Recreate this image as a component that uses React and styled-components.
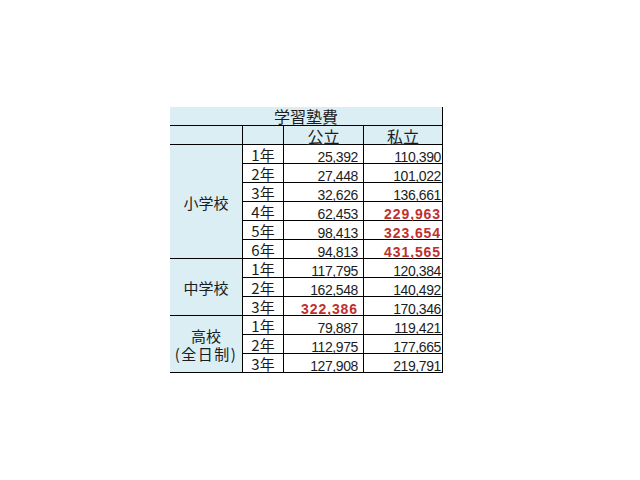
import React from "react";
import styled, { createGlobalStyle } from "styled-components";

const GlobalStyle = createGlobalStyle`
  html, body { margin: 0; padding: 0; background: #ffffff; }
  body { font-family: "Noto Sans CJK JP", "Noto Sans", sans-serif; color: #1c1c1c; }
`;

const Page = styled.div`
  padding: 107px 0 0 170px;
`;

const Grid = styled.div`
  display: grid;
  grid-template-columns: 72px 40px 79px 78px;
  grid-auto-rows: 18px;
  gap: 1px;
  background: #000000;
  padding: 0 1px 1px 0;
  width: max-content;
`;

const Cell = styled.div`
  display: flex;
  align-items: center;
  justify-content: center;
  white-space: nowrap;
`;

const TitleCell = styled(Cell)`
  grid-column: 1 / -1;
  background: #daeef3;
  font-size: 16px;
  line-height: 18px;
`;

const HeadCell = styled(Cell)`
  background: #daeef3;
  font-size: 16px;
  line-height: 16px;
  align-items: flex-end;
  span {
    text-decoration: ${(p) => (p.$underline ? "underline" : "none")};
    text-decoration-thickness: 1px;
    text-underline-offset: 1px;
  }
`;

const GroupCell = styled(Cell)`
  grid-row: span ${(p) => p.$rows};
  background: #daeef3;
  flex-direction: column;
  font-size: 15px;
  line-height: 18px;
  padding-top: 2px;
`;

const GroupLine = styled.span`
  letter-spacing: ${(p) => (p.$wide ? "1.5px" : "0")};
`;

const YearCell = styled(Cell)`
  background: #ffffff;
  font-size: 15px;
  line-height: 15px;
  align-items: flex-end;
  padding-bottom: 1px;
`;

const NumCell = styled(Cell)`
  background: #ffffff;
  justify-content: flex-end;
  align-items: flex-end;
  padding-right: ${(p) => (p.$private ? "1px" : "5px")};
  font-family: "Liberation Sans", Arial, sans-serif;
  font-size: 14px;
  line-height: 12px;
  letter-spacing: ${(p) => (p.$hot ? "0.9px" : "-0.4px")};
  font-weight: ${(p) => (p.$hot ? 700 : 400)};
  color: ${(p) => (p.$hot ? "#c0302e" : "#1c1c1c")};
`;

const groups = [
  {
    name: ["小学校"],
    rows: [
      ["1年", "25,392", "110,390"],
      ["2年", "27,448", "101,022"],
      ["3年", "32,626", "136,661"],
      ["4年", "62,453", "229,963", false, true],
      ["5年", "98,413", "323,654", false, true],
      ["6年", "94,813", "431,565", false, true],
    ],
  },
  {
    name: ["中学校"],
    rows: [
      ["1年", "117,795", "120,384"],
      ["2年", "162,548", "140,492"],
      ["3年", "322,386", "170,346", true, false],
    ],
  },
  {
    name: ["高校", "(全日制)"],
    rows: [
      ["1年", "79,887", "119,421"],
      ["2年", "112,975", "177,665"],
      ["3年", "127,908", "219,791"],
    ],
  },
];

export default function App() {
  return (
    <>
      <GlobalStyle />
      <Page>
        <Grid>
          <TitleCell>学習塾費</TitleCell>
          <HeadCell />
          <HeadCell />
          <HeadCell $underline>
            <span>公立</span>
          </HeadCell>
          <HeadCell $underline>
            <span>私立</span>
          </HeadCell>
          {groups.map((g) => (
            <React.Fragment key={g.name.join("")}>
              <GroupCell $rows={g.rows.length}>
                {g.name.map((n) => (
                  <GroupLine key={n} $wide={n.startsWith("(")}>
                    {n}
                  </GroupLine>
                ))}
              </GroupCell>
              {g.rows.map(([year, pub, priv, hotPub, hotPriv]) => (
                <React.Fragment key={year}>
                  <YearCell>{year}</YearCell>
                  <NumCell $hot={hotPub}>{pub}</NumCell>
                  <NumCell $hot={hotPriv} $private>
                    {priv}
                  </NumCell>
                </React.Fragment>
              ))}
            </React.Fragment>
          ))}
        </Grid>
      </Page>
    </>
  );
}
